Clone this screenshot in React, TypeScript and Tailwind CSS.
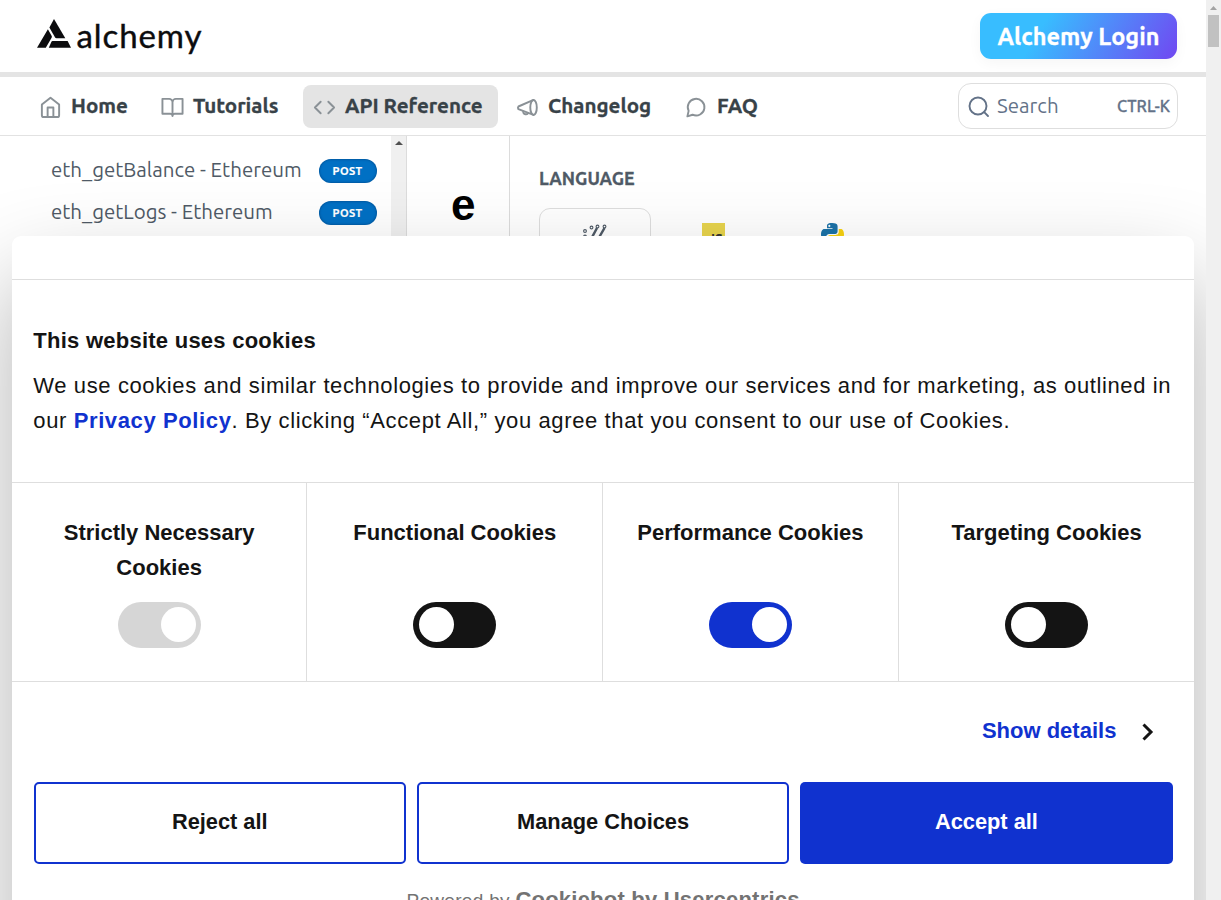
import React from "react";

const ubuntu = "font-['Ubuntu','Noto_Sans',sans-serif]";
const arial = "font-['Liberation_Sans',Arial,sans-serif]";

function Logo() {
  return (
    <div className="flex items-start pb-[2px]">
      <svg className="mt-[2px]" width="34" height="30" viewBox="0 0 34 30" fill="#0c0c0e">
        <path d="M17 0 L28.3 19.3 H19.5 Q18.6 19.3 18.1 18.5 L12.4 8.6 Z" />
        <path d="M10.9 10.3 L14.6 16.8 Q15.2 17.8 14.6 18.8 L8.8 28.8 H0 Z" />
        <path d="M15.5 22 H30.6 L34 28.8 H11.8 L14.3 22.9 Q14.7 22 15.5 22 Z" />
      </svg>
      <span className="ml-[5.500px] font-['Lato',sans-serif] text-[33px] leading-9 tracking-[0.9px] text-[#0c0c0e] [-webkit-text-stroke:0.4px_#0c0c0e]">
        alchemy
      </span>
    </div>
  );
}

const ico = {
  width: 23,
  height: 23,
  viewBox: "0 0 24 24",
  fill: "none",
  stroke: "#8a9196",
  strokeWidth: 2,
  strokeLinecap: "round" as const,
  strokeLinejoin: "round" as const,
};

function HomeIcon() {
  return (
    <svg {...ico}>
      <path d="M3 9.800 L12 2.800 L21 9.800 V21 a2 2 0 0 1-2 2 H5 a2 2 0 0 1-2-2 Z" />
      <path d="M9 22.500 V13 h6 v9.500" />
    </svg>
  );
}
function BookIcon() {
  return (
    <svg {...ico}>
      <path d="M1.500 4 H8.500 a3.500 3.500 0 0 1 3.500 3.500 V22 a2.500 2.500 0 0 0-2.500-2.500 H1.500 Z M22.500 4 H15.500 a3.500 3.500 0 0 0-3.500 3.500 V22 a2.500 2.500 0 0 1 2.500-2.500 H22.500 Z" />
    </svg>
  );
}
function CodeIcon() {
  return (
    <svg {...ico}>
      <path d="M8 7 L2 13 L8 19 M16 7 L22 13 L16 19" />
    </svg>
  );
}
function MegaphoneIcon() {
  return (
    <svg {...ico}>
      <ellipse cx="18.300" cy="13" rx="3.400" ry="7.800" />
      <path d="M18.300 5.200 L2.500 12 Q1.500 13.300 2.500 14.700 L18.300 20.800" />
      <path d="M7.500 17.300 c0 3.300 4.500 3.600 5 1.500" />
    </svg>
  );
}
function ChatIcon() {
  return (
    <svg {...ico}>
      <path d="M3.800 16.600 A8.700 8.700 0 1 1 7.900 20.600 L2.500 22.300 Z" />
    </svg>
  );
}

function NavItem({ icon, label, box }: { icon: React.ReactNode; label: string; box: string }) {
  return (
    <a className={`flex h-[43px] shrink-0 items-center rounded-lg pl-[10px] ${box}`}>
      {icon}
      <span className="ml-[9px] whitespace-nowrap text-[20.600px] font-bold leading-6 text-[#384248] [-webkit-text-stroke:0.3px_#384248]">
        {label}
      </span>
    </a>
  );
}

function EndpointRow({ label }: { label: string }) {
  return (
    <div className="flex h-[42px] items-center justify-between pl-[51px] pr-[14px]">
      <span className="whitespace-nowrap pb-[2px] text-[20.500px] leading-6 text-[#4f5a66]">{label}</span>
      <span className="flex h-6 w-[58px] items-center justify-center rounded-[12px] bg-[#0070c4] pr-px text-[11px] font-bold tracking-[0.4px] text-white shadow-[inset_0_0_2px_1px_rgba(0,50,100,.35)] [-webkit-text-stroke:0.2px_#fff]">
        POST
      </span>
    </div>
  );
}

function Curl() {
  return (
    <svg width="26" height="26" viewBox="0 0 26 26" fill="none" stroke="#4f5a66">
      <path d="M15 4 L8 17 M22.500 4 L15 17" strokeWidth="2.500" />
      <g strokeWidth="1.100">
        <circle cx="15.500" cy="2.500" r="1.400" />
        <circle cx="22.500" cy="2.500" r="1.400" />
        <circle cx="9.500" cy="3.500" r="1.400" />
        <circle cx="3" cy="7" r="1.400" />
        <circle cx="3" cy="12.500" r="1.400" />
      </g>
    </svg>
  );
}

function Python() {
  return (
    <svg width="23" height="23" viewBox="0 0 24 24">
      <path fill="#1c73a8" d="M11.800 0 C6 0 6.300 2.500 6.300 2.500 V5.500 H12 V6.300 H4 C4 6.300 0 5.900 0 12 C0 18 3.500 17.700 3.500 17.700 H5.500 V14.800 C5.500 11.500 8.500 11.500 8.500 11.500 H14 C14 11.500 17.300 11.500 17.300 8.500 V3.300 C17.300 3.300 17.800 0 11.800 0 Z" />
      <path fill="#f8d210" d="M12.200 24 C18 24 17.700 21.500 17.700 21.500 V18.500 H12 V17.700 H20 C20 17.700 24 18.100 24 12 C24 6 20.500 6.300 20.500 6.300 H18.500 V9.200 C18.500 12.500 15.500 12.500 15.500 12.500 H10 C10 12.500 6.700 12.500 6.700 15.500 V20.700 C6.700 20.700 6.200 24 12.200 24 Z" />
      <circle cx="8.700" cy="3" r="1.100" fill="#fff" />
    </svg>
  );
}

function Toggle({ on, color }: { on: boolean; color: string }) {
  return (
    <span className={`flex h-[46px] w-[83px] items-center rounded-full pl-[6px] pr-[4.500px] ${on ? "justify-end" : ""} ${color}`}>
      <span className="h-[35px] w-[35px] rounded-full bg-white" />
    </span>
  );
}

function Category({ label, on, color, edge }: { label: string; on: boolean; color: string; edge: string }) {
  return (
    <div className={`flex flex-col items-center justify-between px-5 pb-[33px] pt-8 text-center ${edge}`}>
      <span className="text-[22px] font-bold leading-[35px]">{label}</span>
      <Toggle on={on} color={color} />
    </div>
  );
}

function CookieDialog() {
  return (
    <section className={`absolute left-[11.800px] top-[235.700px] h-[760px] w-[1182.600px] rounded-[9px] bg-white text-[#141414] shadow-[0_44px_94px_rgba(0,0,0,.3)] ${arial}`}>
      <div className="h-[44px] border-b border-[#dedede]" />
      <div className="h-[203px] border-b border-[#dedede] pl-[21.500px] pt-[43px]">
        <h2 className="text-[22px] font-bold leading-[35px] tracking-[0.25px]">This website uses cookies</h2>
        <p className="mt-[10px] whitespace-nowrap text-[22px] leading-[35px] tracking-[0.615px]">
          We use cookies and similar technologies to provide and improve our services and for marketing, as outlined in
          <br />
          our <b className="text-[#1032cf]">Privacy Policy</b>. By clicking “Accept All,” you agree that you consent to our use of Cookies.
        </p>
      </div>
      <div className="grid h-[199px] grid-cols-4 border-b border-[#dedede]">
        <Category label="Strictly Necessary Cookies" on color="bg-[#d6d6d6]" edge="border-r border-[#dedede]" />
        <Category label="Functional Cookies" on={false} color="bg-[#141414]" edge="border-r border-[#dedede]" />
        <Category label="Performance Cookies" on color="bg-[#1032cf]" edge="border-r border-[#dedede]" />
        <Category label="Targeting Cookies" on={false} color="bg-[#141414]" edge="" />
      </div>
      <div className="flex h-[100px] items-center justify-end pr-[39px]">
        <span className="pb-[3px] text-[22px] font-bold leading-[35px] text-[#1032cf]">Show details</span>
        <svg className="ml-[25px]" width="14" height="18" viewBox="0 0 14 18" fill="none" stroke="#141414" strokeWidth="3">
          <path d="M2.500 1.500 L10 9 L2.500 16.500" />
        </svg>
      </div>
      <div className="grid grid-cols-3 gap-[11px] px-[21.800px] text-[21.800px] font-bold">
        <button className="h-[82px] rounded-[5px] border-2 border-[#1032cf]">Reject all</button>
        <button className="h-[82px] rounded-[5px] border-2 border-[#1032cf]">Manage Choices</button>
        <button className="h-[82px] rounded-[5px] bg-[#1032cf] text-white">Accept all</button>
      </div>
      <div className="mt-[22px] whitespace-nowrap text-center leading-7 text-[#737373]">
        <span className="text-[19px] tracking-[0.3px]">Powered by </span>
        <b className="text-[22px] tracking-[0.22px]">Cookiebot by Usercentrics</b>
      </div>
    </section>
  );
}

export default function App() {
  return (
    <div className={`flex h-[900px] w-[1221px] overflow-hidden bg-white ${ubuntu}`}>
      <div className="relative flex h-[900px] w-[1206px] flex-col overflow-hidden">
        <header className="flex h-[77px] shrink-0 items-center justify-between border-b-[5px] border-[#e4e4e4] pl-[37px] pr-[29px]">
          <Logo />
          <a className="flex h-[46px] w-[197px] items-center justify-center whitespace-nowrap rounded-[11px] bg-[linear-gradient(121deg,#38bdff_31%,#6f4bf2_98%)] pt-[2px] text-[23.500px] font-bold text-white shadow-[0_4px_14px_rgba(0,0,0,.04)] [-webkit-text-stroke:0.3px_#fff]">
            Alchemy Login
          </a>
        </header>
        <nav className="flex h-[59px] shrink-0 items-center border-b border-[#e2e2e2] pl-[29px] pr-[28px]">
          <NavItem icon={<HomeIcon />} label="Home" box="w-[122px]" />
          <NavItem icon={<BookIcon />} label="Tutorials" box="w-[152px]" />
          <NavItem icon={<CodeIcon />} label="API Reference" box="w-[195px] bg-[#e4e4e4]" />
          <NavItem icon={<MegaphoneIcon />} label="Changelog" box="ml-[8px] w-[169px]" />
          <NavItem icon={<ChatIcon />} label="FAQ" box="w-[100px]" />
          <div className="ml-auto flex h-[46px] w-[220px] items-center rounded-[13px] border-[1.500px] border-[#dedede] pl-[9px] pr-[7px] pt-px text-[#637288]">
            <svg width="22" height="22" viewBox="0 0 22 22" fill="none" stroke="#637288" strokeWidth="1.900" strokeLinecap="round">
              <circle cx="10" cy="10" r="8.500" />
              <path d="M16.200 16.200 L20 20" />
            </svg>
            <span className="ml-[7px] text-[20.500px]">Search</span>
            <span className="ml-auto whitespace-nowrap text-[16.200px] font-medium [-webkit-text-stroke:0.3px_#637288]">CTRL-K</span>
          </div>
        </nav>
        <main className="flex grow">
          <aside className="w-[391px] pt-[14px]">
            <EndpointRow label="eth_getBalance - Ethereum" />
            <EndpointRow label="eth_getLogs - Ethereum" />
          </aside>
          <div className="flex w-4 justify-center border-r border-[#dcdcdc] bg-[#f0f0f0] pt-[5px]">
            <svg width="8" height="4" viewBox="0 0 8 4"><path d="M0 4 L4 0 L8 4 Z" fill="#505050" /></svg>
          </div>
          <article className={`w-[103px] border-r border-[#dcdcdc] pl-[44px] pt-[44px] ${arial}`}>
            <h1 className="text-[44px] font-bold leading-[50px] text-black">e</h1>
          </article>
          <section className="pl-[29px] pt-[30px]">
            <h3 className="text-[17.800px] font-bold leading-6 text-[#4f5a66] [-webkit-text-stroke:0.3px_#4f5a66]">LANGUAGE</h3>
            <div className="mt-[18px] flex">
              <div className="flex h-[90px] w-[112px] justify-center rounded-[11px] border border-[#dedede] pt-[15px]"><Curl /></div>
              <div className="w-[126px] pl-[51px] pt-[15px]">
                <div className="flex h-6 w-[23px] items-end justify-end bg-[#e8d44d] pr-[2px] text-[14px] font-bold leading-4 text-[#333]">JS</div>
              </div>
              <div className="pl-[44px] pt-[15px]"><Python /></div>
            </div>
          </section>
        </main>
        <CookieDialog />
      </div>
      <div className="flex w-[15px] flex-col items-center bg-[#f0f0f0]">
        <svg className="mt-[6px]" width="7" height="4" viewBox="0 0 7 4"><path d="M0 4 L3.500 0 L7 4 Z" fill="#a3a3a3" /></svg>
        <div className="mt-[5px] h-8 w-[11px] bg-[#c1c1c1]" />
      </div>
    </div>
  );
}
